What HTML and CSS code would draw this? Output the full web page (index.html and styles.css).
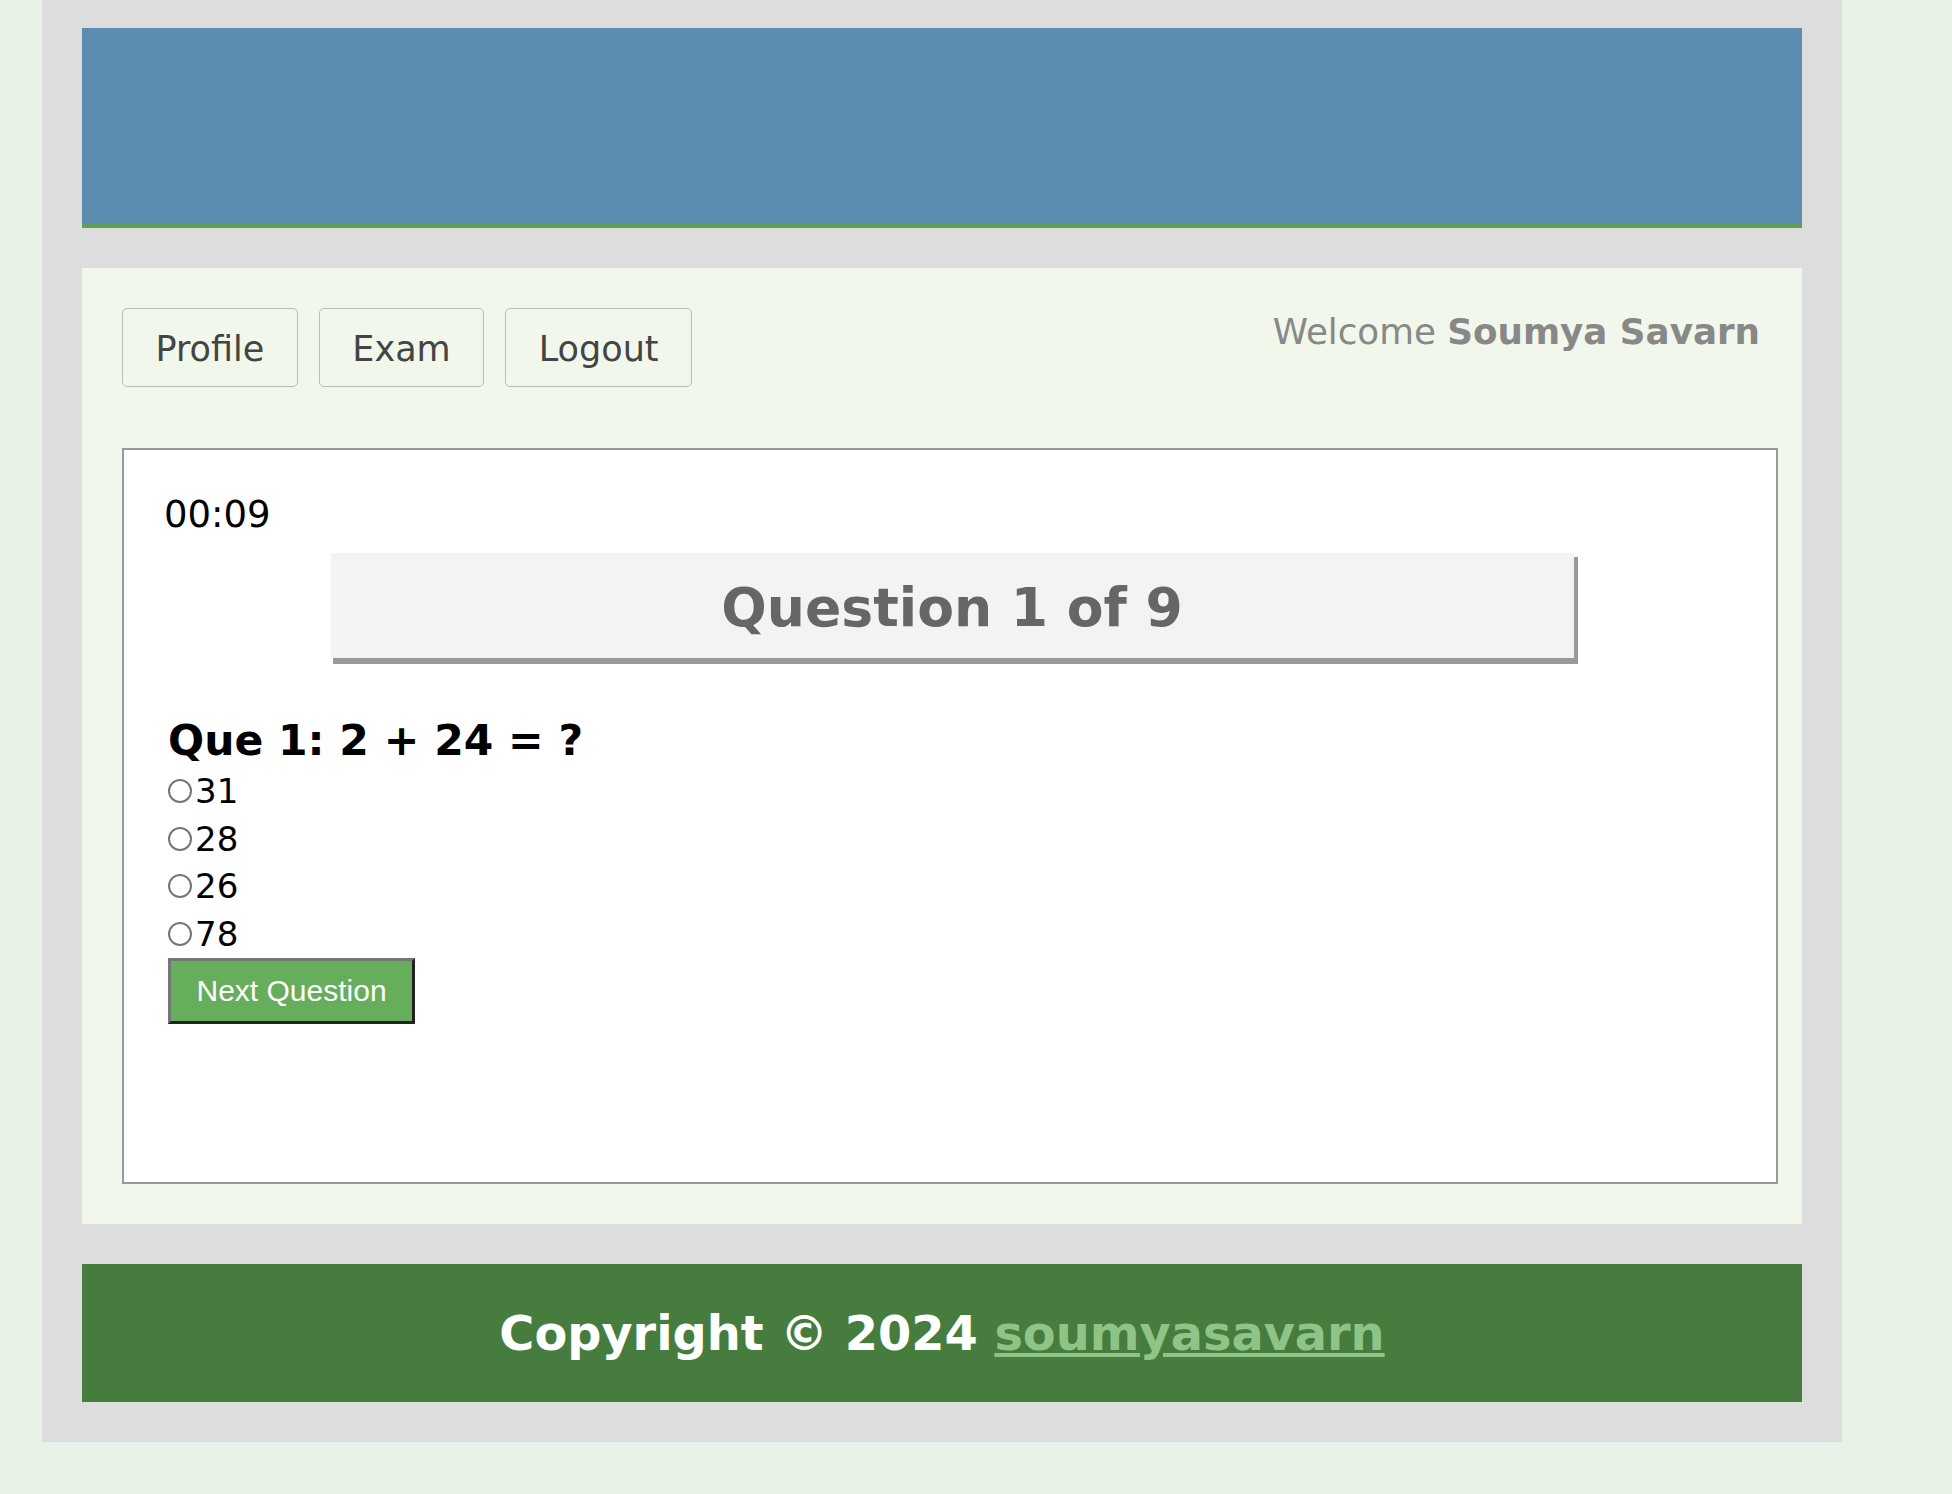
FILE: index.html
```html
<!DOCTYPE html>
<html lang="en">
<head>
<meta charset="utf-8">
<title>Exam</title>
<link rel="stylesheet" href="styles.css">
</head>
<body>
<div class="page">
  <header class="banner"></header>
  <main class="main">
    <div class="topbar">
      <nav class="nav">
        <button class="nav-btn">Profile</button>
        <button class="nav-btn">Exam</button>
        <button class="nav-btn">Logout</button>
      </nav>
      <div class="welcome">Welcome <b>Soumya Savarn</b></div>
    </div>
    <section class="quiz">
      <div class="timer">00:09</div>
      <div class="qhead">Question 1 of 9</div>
      <form class="qarea">
        <h2 class="qtext">Que 1: 2 + 24 = ?</h2>
        <label class="opt"><input type="radio" name="a" class="radio">31</label>
        <label class="opt"><input type="radio" name="a" class="radio">28</label>
        <label class="opt"><input type="radio" name="a" class="radio">26</label>
        <label class="opt"><input type="radio" name="a" class="radio">78</label>
        <button type="button" class="next">Next Question</button>
      </form>
    </section>
  </main>
  <footer class="footer">
    <p class="copy">Copyright © 2024 <a href="#" class="copy-link">soumyasavarn</a></p>
  </footer>
</div>
</body>
</html>
```
FILE: styles.css
```css
html, body {
  margin: 0;
  padding: 0;
}
body {
  background: #e8f3e8;
  font-family: "DejaVu Sans", Verdana, sans-serif;
  height: 1494px;
}
.page {
  width: 1800px;
  margin-left: 42px;
  box-sizing: border-box;
  background: #dddddd;
  padding: 28px 40px 40px;
}
.banner {
  height: 196px;
  background: #5c8db1;
  border-bottom: 4px solid #5f9f53;
}
.main {
  margin-top: 40px;
  background: #f1f7ea;
  padding: 40px;
}
.topbar {
  display: flex;
  justify-content: space-between;
  align-items: flex-start;
}
.nav {
  display: flex;
  gap: 21px;
}
.nav-btn {
  font-family: "DejaVu Sans", Verdana, sans-serif;
  font-size: 35px;
  line-height: 41px;
  color: #444;
  background: #f1f7ea;
  border: 1px solid #bbbbbb;
  border-radius: 5px;
  padding: 20px 32.5px 16px;
  margin: 0;
}
.welcome {
  font-size: 35.7px;
  line-height: 41px;
  color: #888;
  padding-top: 3px;
  padding-right: 2px;
}
.welcome b {
  font-weight: bold;
}
.quiz {
  margin-top: 61px;
  width: 1656px;
  height: 736px;
  box-sizing: border-box;
  background: #fff;
  border: 2px solid #999;
  padding: 43px 40px 0;
}
.timer {
  font-size: 37px;
  line-height: normal;
  color: #000;
}
.qhead {
  width: 1243px;
  margin: 17px auto 0;
  position: relative;
  left: 2px;
  box-sizing: border-box;
  background: #f3f3f3;
  box-shadow: 3px 5px 0 1px #999;
  text-align: center;
  font-weight: bold;
  font-size: 53.6px;
  line-height: 63px;
  color: #666;
  padding: 23px 0 19px;
}
.qarea {
  margin: 0;
  padding-left: 4px;
}
.qtext {
  margin: 58px 0 2px;
  font-size: 42.5px;
  line-height: normal;
  font-weight: bold;
  color: #000;
}
.opt {
  display: flex;
  align-items: center;
  height: 47.7px;
  font-size: 34px;
  color: #000;
}
.radio {
  appearance: none;
  -webkit-appearance: none;
  width: 24px;
  height: 24px;
  margin: 0 3px 0 0;
  border: 2px solid #777;
  border-radius: 50%;
  background: #fff;
  box-sizing: border-box;
}
.next {
  display: block;
  margin: 0;
  font-family: "Liberation Sans", Arial, sans-serif;
  font-size: 30px;
  line-height: 34px;
  color: #fff;
  background: #66ad5c;
  border-style: solid;
  border-width: 3px;
  border-color: #757575 #222 #222 #757575;
  padding: 13px 25.5px;
}
.footer {
  margin-top: 40px;
  height: 138px;
  background: #467c3d;
  display: flex;
  align-items: center;
  justify-content: center;
}
.copy {
  margin: 0;
  font-size: 47.8px;
  font-weight: bold;
  color: #fff;
}
.copy-link {
  color: #8fc487;
  text-decoration: underline;
}
```
